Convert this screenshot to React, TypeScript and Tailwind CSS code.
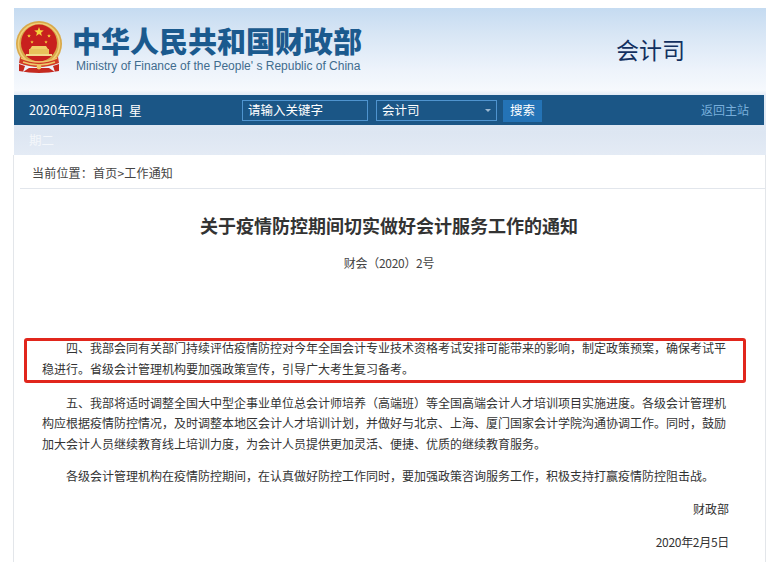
const cjk = "font-['Noto_Sans_CJK_SC','Liberation_Sans',sans-serif]";

function Emblem() {
  const star = (cx: number, cy: number, r: number) => {
    const pts: string[] = [];
    for (let i = 0; i < 10; i++) {
      const a = -Math.PI / 2 + (i * Math.PI) / 5;
      const rr = i % 2 === 0 ? r : r * 0.42;
      pts.push(`${cx + rr * Math.cos(a)},${cy + rr * Math.sin(a)}`);
    }
    return <polygon points={pts.join(" ")} fill="#f4d43c" />;
  };
  return (
    <svg width="48" height="52" viewBox="0 0 48 52" className="shrink-0">
      <ellipse cx="24" cy="23" rx="23" ry="23" fill="#d9a94a" />
      <ellipse cx="24" cy="23" rx="20.5" ry="20.5" fill="none" stroke="#f0cf7a" strokeWidth="1.6" />
      <ellipse cx="24" cy="22" rx="18" ry="18.5" fill="#c8201e" />
      {star(24, 11, 5)}
      {star(14, 15, 2)}
      {star(34, 15, 2)}
      {star(17, 21, 1.8)}
      {star(31, 21, 1.8)}
      <path d="M15 28 L33 28 L31 25 L17 25 Z" fill="#f0cf6a" />
      <rect x="14" y="28" width="20" height="5" fill="#e8c25a" />
      <rect x="11" y="33" width="26" height="2" fill="#f2d98a" />
      <path d="M5 36 Q24 46 43 36 L44 42 Q24 50 4 42 Z" fill="#d23a24" />
      <path d="M6 37 Q24 45 42 37 M8 41 Q24 47 40 41" stroke="#eec76a" strokeWidth="1.5" fill="none" />
      <path d="M4 43 L10 45 L8 51 L14 47 L34 47 L40 51 L38 45 L44 43 L44 50 Q24 54 4 50 Z" fill="#c52a20" />
      <circle cx="24" cy="46" r="2.4" fill="#eec76a" />
    </svg>
  );
}

export default function App() {
  return (
    <div className={`${cjk} relative w-[782px] h-[562px] overflow-hidden bg-white text-[#333] pt-2`}>
      <div className="ml-[14px] w-[752px]">
        <div className="relative h-[147px] bg-[linear-gradient(180deg,#c5dbf1_0%,#d8e6f5_18%,#edf3fb_42%,#f6f9fd_56%,#e4ecf6_59%,#dde6f2_85%,#e4ebf5_100%)]">
          <div className="flex h-[87px]">
            <div className="pt-[13px] pl-[1px]">
              <Emblem />
            </div>
            <div className="ml-[9px] pt-[16px]">
              <div className="text-[29px] leading-[32px] font-black text-[#1b5a8e] whitespace-nowrap">中华人民共和国财政部</div>
              <div className="font-['Liberation_Sans',sans-serif] ml-[4px] mt-[3px] text-[12px] leading-[14px] text-[#3f6c8e] whitespace-nowrap">Ministry of Finance of the People' s Republic of China</div>
            </div>
            <div className="ml-[254px] pt-[26px] text-[23px] leading-[30px] text-[#12305f] whitespace-nowrap">会计司</div>
          </div>
          <div className="flex items-center h-[30px] w-[750px] bg-[#1b5686] text-white text-[12.7px]">
            <div className="ml-[15px] w-[213px] whitespace-nowrap">2020年02月18日&nbsp;&nbsp;星</div>
            <div className="flex items-center w-[126px] h-[21px] border border-[#4f94cf] pl-[5px] text-[12.5px] whitespace-nowrap">请输入关键字</div>
            <div className="ml-[8px] flex items-center justify-between w-[121px] h-[21px] border border-[#4f94cf] pl-[5px] pr-[5px] text-[12.5px] whitespace-nowrap">
              <span>会计司</span>
              <span className="w-0 h-0 border-x-[3px] border-x-transparent border-t-[3px] border-t-[#9db9d2]" />
            </div>
            <div className="ml-[6px] flex items-center justify-center w-[39px] h-[22px] mt-[1px] bg-[#2473b6] text-[12.5px] whitespace-nowrap">搜索</div>
            <div className="ml-auto mr-[15px] text-[#78aedb] text-[12px] whitespace-nowrap">返回主站</div>
          </div>
          <div className="flex items-center h-[30px] pl-[15px] text-[12.5px] text-[#f4f7fb]">期二</div>
        </div>
      </div>
      <div className="ml-[13px] w-[753px] h-[410px] border-l border-r border-[#e3e6ea]">
        <div className="ml-[6px] h-[34px] border-b border-[#e2e6ec] pl-[12px] text-[12px] leading-[36px] tracking-[0.2px] text-[#444] whitespace-nowrap">当前位置：首页&gt;工作通知</div>
        <h1 className="mt-[24px] ml-[-1px] text-center text-[18px] leading-[24px] font-bold text-[#333] whitespace-nowrap">关于疫情防控期间切实做好会计服务工作的通知</h1>
        <div className="mt-[17px] ml-[-1px] text-center text-[12px] leading-[18px] tracking-[-0.3px] text-[#444]">财会（2020）2号</div>
        <div className="mt-[66px] ml-[28px] w-[687px] text-[12px] leading-[20.6px] text-[#333]">
          <p className="indent-[24px]">四、我部会同有关部门持续评估疫情防控对今年全国会计专业技术资格考试安排可能带来的影响，制定政策预案，确保考试平稳进行。省级会计管理机构要加强政策宣传，引导广大考生复习备考。</p>
          <p className="indent-[24px] mt-[13.4px]">五、我部将适时调整全国大中型企事业单位总会计师培养（高端班）等全国高端会计人才培训项目实施进度。各级会计管理机构应根据疫情防控情况，及时调整本地区会计人才培训计划，并做好与北京、上海、厦门国家会计学院沟通协调工作。同时，鼓励加大会计人员继续教育线上培训力度，为会计人员提供更加灵活、便捷、优质的继续教育服务。</p>
          <p className="indent-[24px] mt-[11.4px]">各级会计管理机构在疫情防控期间，在认真做好防控工作同时，要加强政策咨询服务工作，积极支持打赢疫情防控阻击战。</p>
          <p className="text-right mt-[12.4px]">财政部</p>
          <p className="text-right mt-[12.4px] tracking-[-0.3px]">2020年2月5日</p>
        </div>
      </div>
      <div className="absolute left-[24px] top-[338px] w-[722px] h-[45px] border-[3px] border-[#e1261c] rounded-[3px]" />
    </div>
  );
}
